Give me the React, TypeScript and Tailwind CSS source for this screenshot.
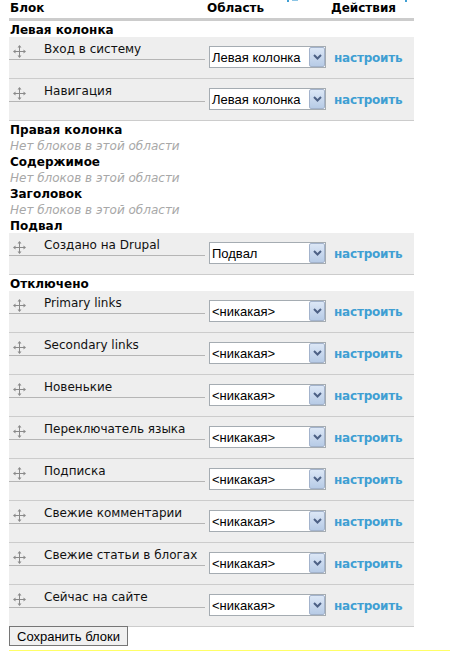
const Move = () => (
  <svg width="13" height="13" viewBox="0 0 13 13" className="mt-[5px] shrink-0" fill="#8a8a8a">
    <rect x="6" y="2" width="1" height="9" />
    <rect x="2" y="6" width="9" height="1" />
    <path d="M6.5 0 L8.5 2.5 H4.5Z M6.5 13 L4.5 10.5 H8.5Z M0 6.5 L2.5 4.5 V8.5Z M13 6.5 L10.5 8.5 V4.5Z" />
  </svg>
);

function Row({ name, region }: { name: string; region: string }) {
  return (
    <div className="flex h-[42px] border-b border-[#cccccc] bg-[#eeeeee]">
      <div className="mt-[1px] flex h-[22px] w-[196px] items-center border-b border-[#b5b5b5] pl-1">
        <Move />
        <span className="ml-[18px] whitespace-nowrap text-[12px] text-[#111111]">{name}</span>
      </div>
      <div className="ml-[4px] mt-[9px] flex h-[22px] w-[117px] justify-between border border-[#a5acb2] bg-white pl-[2px] font-['Liberation_Sans',sans-serif] text-[13px] text-black">
        <span className="self-center pt-[1px]">{region}</span>
        <span className="flex w-[16px] items-center justify-center rounded-[2px] border border-[#a3b3cc] bg-gradient-to-b from-[#dce7f6] to-[#b7cbe6]">
          <svg width="9" height="6" viewBox="0 0 9 6" fill="none" stroke="#4d6185" strokeWidth="2">
            <path d="M1 1 L4.5 4.5 L8 1" />
          </svg>
        </span>
      </div>
      <a href="#" className="ml-[8px] mt-[14px] text-[12px] font-bold leading-[14px] tracking-[-0.2px] text-[#3f9fd3]">
        настроить
      </a>
    </div>
  );
}

function Title({ children }: { children: string }) {
  return <div className="h-[16px] pl-[1px] pt-[1px] text-[12px] font-bold leading-[16px] text-black">{children}</div>;
}

function Empty() {
  return <div className="h-[16px] pl-[1px] pt-[1px] text-[12px] italic leading-[16px] text-[#a8a8a8]">Нет блоков в этой области</div>;
}

export default function App() {
  return (
    <div className="h-[651px] w-[450px] overflow-hidden bg-white pl-[9px] font-['DejaVu_Sans',sans-serif]">
      <div className="w-[405px]">
        {/* cut-off link from the part of the page above */}
        <div className="flex h-[2px] items-start pl-[278px]">
          <span className="h-[2px] w-[2px] bg-[#3f9fd3]" />
          <span className="ml-[3px] h-[1px] w-[6px] bg-[#8cc5e5]" />
          <span className="ml-[107px] h-[2px] w-[2px] bg-[#3f9fd3]" />
        </div>
        <div className="flex h-[19px] items-end border-b-[3px] border-[#cccccc] pb-[1px] text-[12px] font-bold text-black">
          <span className="w-[198px] pl-[1px]">Блок</span>
          <span className="w-[124px]">Область</span>
          <span>Действия</span>
        </div>
        <Title>Левая колонка</Title>
        <Row name="Вход в систему" region="Левая колонка" />
        <Row name="Навигация" region="Левая колонка" />
        <Title>Правая колонка</Title>
        <Empty />
        <Title>Содержимое</Title>
        <Empty />
        <Title>Заголовок</Title>
        <Empty />
        <Title>Подвал</Title>
        <Row name="Создано на Drupal" region="Подвал" />
        <Title>Отключено</Title>
        <Row name="Primary links" region="<никакая>" />
        <Row name="Secondary links" region="<никакая>" />
        <Row name="Новенькие" region="<никакая>" />
        <Row name="Переключатель языка" region="<никакая>" />
        <Row name="Подписка" region="<никакая>" />
        <Row name="Свежие комментарии" region="<никакая>" />
        <Row name="Свежие статьи в блогах" region="<никакая>" />
        <Row name="Сейчас на сайте" region="<никакая>" />
      </div>
      <button className="mt-[-1px] block h-[20px] w-[119px] border border-[#767676] bg-[#f0f0f0] font-['Liberation_Sans',sans-serif] text-[13px] text-black">
        Сохранить блоки
      </button>
      <div className="mt-[4px] h-[1px] bg-[#ffff66]" />
    </div>
  );
}
